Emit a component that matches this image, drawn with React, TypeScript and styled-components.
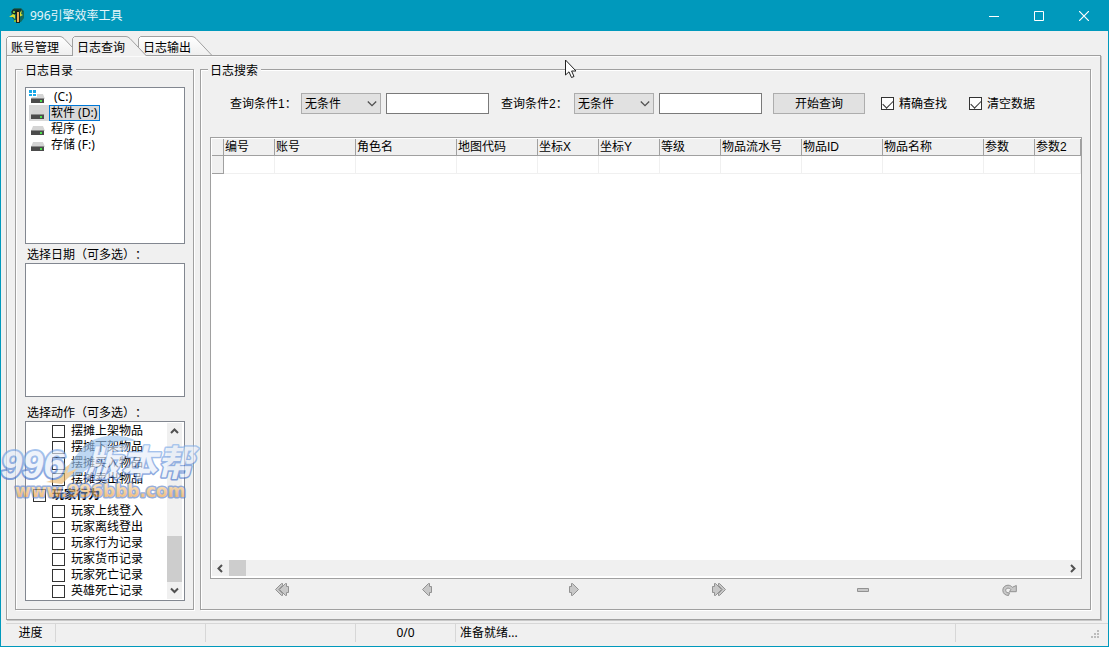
import React from "react";
import styled, { createGlobalStyle } from "styled-components";

const FONT = '"Liberation Sans", "Noto Sans CJK SC", sans-serif';
const UI_FONT = '"Noto Sans", "Noto Sans CJK SC", sans-serif';
const ACCENT = "#0099bc";
const FACE = "#f0f0f0";
const LINE = "#a0a0a0";

const GlobalStyle = createGlobalStyle`
  * { box-sizing: border-box; }
  body { margin: 0; background: ${FACE}; }
  button, input, select { font: inherit; color: inherit; margin: 0; }
`;

const Window = styled.div`
  position: relative;
  display: flex;
  flex-direction: column;
  height: 100vh;
  border: 1px solid ${ACCENT};
  border-top: 0;
  background: ${FACE};
  color: #000;
  font: 12px/16px ${FONT};
  text-spacing-trim: space-all;
  white-space: nowrap;
  overflow: hidden;
`;

const TitleBar = styled.header`
  display: flex;
  align-items: center;
  flex: none;
  height: 31px;
  padding: 0 2px 0 8px;
  background: ${ACCENT};
  color: #e6f6fa;
`;

const AppTitle = styled.h1`
  flex: 1;
  margin: 0 0 0 5px;
  font: 12px/16px ${UI_FONT};
`;

const CaptionButton = styled.button`
  display: grid;
  place-items: center;
  width: 45px;
  height: 31px;
  padding: 0;
  border: 0;
  background: none;
`;

const TabStrip = styled.nav`
  display: flex;
  flex: none;
  height: 20px;
  margin: 5px 0 -1px 5px;
`;

const TabButton = styled.button<{ $active?: boolean }>`
  position: relative;
  z-index: ${(p) => (p.$active ? 2 : 1)};
  width: 66px;
  height: 20px;
  padding: 3px 0 0 5px;
  border: 0;
  background: none;
  text-align: left;
  line-height: 16px;
`;

const TabShape = styled.svg`
  position: absolute;
  left: 0;
  top: 0;
  z-index: -1;
  overflow: visible;
`;

const Page = styled.main`
  display: flex;
  flex: 1;
  min-height: 0;
  gap: 6px;
  margin: 0 7px 0 5px;
  padding: 5px 9px 9px 8px;
  border: 1px solid ${LINE};
  box-shadow: 1px 1px 0 #c8c8c8, inset 1px 1px 0 #fbfbfb;
`;

const Group = styled.fieldset<{ $grow?: boolean }>`
  display: flex;
  flex-direction: column;
  flex: ${(p) => (p.$grow ? "1" : "0 0 179px")};
  min-width: 0;
  margin: 0;
  padding: ${(p) => (p.$grow ? "15px 8px 8px 9px" : "9px 8px 8px 9px")};
  border: 1px solid ${LINE};
  box-shadow: 1px 1px 0 #fff, inset 1px 1px 0 #fff;
`;

const Legend = styled.legend`
  height: 17px;
  padding: 2px 3px 0 2px;
  margin-left: -2px;
  background: ${FACE};
`;

const ListBox = styled.ul<{ $height?: number }>`
  flex: ${(p) => (p.$height ? `0 0 ${p.$height}px` : "1")};
  min-height: 0;
  margin: 0;
  padding: 1px 3px;
  list-style: none;
  border: 1px solid #828790;
  background: #fff;
  overflow: hidden;
`;

const Caption = styled.h2<{ $gap?: number }>`
  flex: none;
  margin: 0;
  padding: ${(p) => p.$gap ?? 4}px 0 0 2px;
  font: 12px/15px ${FONT};
`;

const Drive = styled.li<{ $selected?: boolean }>`
  display: flex;
  align-items: center;
  height: 16px;
  width: max-content;
  background: ${(p) => (p.$selected ? "#d9d9d9" : "none")};
  font-family: ${UI_FONT};
`;

const DriveName = styled.span<{ $selected?: boolean; $indent?: boolean }>`
  height: 16px;
  margin-left: 3px;
  padding: 0 2px 0 ${(p) => (p.$indent ? 4 : 1)}px;
  line-height: 14px;
  border: 1px solid ${(p) => (p.$selected ? "#0078d7" : "transparent")};
`;

const ActionBox = styled.div`
  display: flex;
  flex: 1;
  min-height: 0;
  padding: 1px;
  border: 1px solid #828790;
  background: #fff;
`;

const ActionList = styled.ul`
  flex: 1;
  margin: 0;
  padding: 0;
  list-style: none;
  overflow: hidden;
`;

const ActionRow = styled.li<{ $parent?: boolean }>`
  padding-left: ${(p) => (p.$parent ? 6 : 25)}px;
  font-weight: ${(p) => (p.$parent ? 700 : 400)};
`;

const CheckLabel = styled.label<{ $gap?: number }>`
  display: flex;
  align-items: center;
  gap: ${(p) => p.$gap ?? 6}px;
  height: 16px;
`;

const CheckBox = styled.input`
  appearance: none;
  flex: none;
  display: grid;
  place-items: start center;
  width: 13px;
  height: 13px;
  border: 1px solid #333;
  background: #fff;

  &:checked::after {
    content: "";
    width: 9px;
    height: 5px;
    margin-top: 2px;
    border: solid #333;
    border-width: 0 0 1px 1px;
    transform: rotate(-45deg);
  }
`;

const VScroll = styled.div`
  display: flex;
  flex-direction: column;
  align-items: stretch;
  width: 15px;
  margin-right: 1px;
  background: ${FACE};
`;

const VThumb = styled.div`
  height: 46px;
  margin-top: auto;
  background: #cdcdcd;
`;

const HScroll = styled.div`
  display: flex;
  height: 16px;
  background: ${FACE};
`;

const HThumb = styled.div`
  width: 17px;
  margin-right: auto;
  background: #cdcdcd;
`;

const ScrollButton = styled.button`
  display: grid;
  place-items: center;
  flex: 0 0 17px;
  padding: 0;
  border: 0;
  background: none;
`;

const SearchBar = styled.div`
  display: flex;
  align-items: center;
  flex: none;
  height: 21px;
  padding-left: 20px;
`;

const FieldLabel = styled.label<{ $wide?: boolean }>`
  flex: 0 0 ${(p) => (p.$wide ? 85 : 71)}px;
  padding-left: ${(p) => (p.$wide ? 12 : 0)}px;
`;

const SelectWrap = styled.span`
  position: relative;
  display: flex;
  flex: 0 0 80px;
  margin-right: 5px;
`;

const Select = styled.select`
  appearance: none;
  width: 100%;
  height: 21px;
  padding: 0 20px 0 3px;
  border: 1px solid #adadad;
  border-radius: 0;
  background: #e1e1e1;
`;

const SelectArrow = styled.svg`
  position: absolute;
  right: 4px;
  top: 8px;
  pointer-events: none;
`;

const TextBox = styled.input`
  flex: 0 0 103px;
  width: 103px;
  height: 21px;
  padding: 0 3px;
  border: 1px solid #7a7a7a;
  background: #fff;
`;

const PushButton = styled.button`
  flex: 0 0 92px;
  height: 21px;
  margin: 0 16px 0 11px;
  padding: 0;
  border: 1px solid #adadad;
  background: #e1e1e1;
`;

const Checks = styled.div`
  display: flex;
  gap: 22px;
`;

const GridBox = styled.div`
  display: flex;
  flex-direction: column;
  flex: 1;
  min-height: 0;
  margin-top: 23px;
  padding: 1px 0 2px 1px;
  border: 1px solid ${LINE};
  background: #fff;
`;

const GridScroll = styled.div`
  flex: 1;
  min-height: 0;
  overflow: hidden;
`;

const Table = styled.table`
  width: 100%;
  table-layout: fixed;
  border-collapse: separate;
  border-spacing: 0;
`;

const Th = styled.th`
  height: 17px;
  padding: 0 0 0 1px;
  border-right: 1px solid ${LINE};
  border-bottom: 1px solid ${LINE};
  background: ${FACE};
  font-weight: 400;
  line-height: 16px;
  text-align: left;
`;

const Td = styled.td<{ $handle?: boolean }>`
  height: 18px;
  padding: 0;
  border-right: 1px solid ${(p) => (p.$handle ? LINE : FACE)};
  border-bottom: 1px solid ${(p) => (p.$handle ? LINE : FACE)};
  background: ${(p) => (p.$handle ? FACE : "#fff")};
`;

const Navigator = styled.div`
  display: grid;
  grid-template-columns: repeat(6, 1fr);
  flex: none;
  height: 22px;
  padding-bottom: 2px;
`;

const NavButton = styled.button`
  display: grid;
  place-items: center;
  padding: 0;
  border: 0;
  background: none;
`;

const StatusBar = styled.footer`
  display: flex;
  flex: none;
  height: 23px;
  margin: 3px 0 0 5px;
  border-top: 1px solid #d7d7d7;
`;

const StatusCell = styled.div<{ $width?: number; $center?: boolean }>`
  flex: ${(p) => (p.$width ? `0 0 ${p.$width}px` : "1")};
  height: 18px;
  padding: 1px 0 0 ${(p) => (p.$center ? 0 : 4)}px;
  border-right: 1px solid #d7d7d7;
  font-family: ${UI_FONT};
  text-align: ${(p) => (p.$center ? "center" : "left")};
`;

const GripArea = styled.div`
  display: flex;
  align-items: flex-end;
  justify-content: flex-end;
  flex: 0 0 152px;
  padding: 0 9px 8px 0;
`;

const Watermark = styled.svg`
  position: absolute;
  left: -1px;
  top: 430px;
  z-index: 5;
  pointer-events: none;
`;

const Pointer = styled.svg`
  position: absolute;
  left: 563px;
  top: 59px;
  z-index: 6;
  pointer-events: none;
`;

const drives = [
  { name: "(C:)", system: true },
  { name: "软件 (D:)", selected: true },
  { name: "程序 (E:)" },
  { name: "存储 (F:)" },
];

const actions = [
  { name: "摆摊上架物品" },
  { name: "摆摊下架物品" },
  { name: "摆摊买入物品" },
  { name: "摆摊卖出物品" },
  { name: "玩家行为", parent: true },
  { name: "玩家上线登入" },
  { name: "玩家离线登出" },
  { name: "玩家行为记录" },
  { name: "玩家货币记录" },
  { name: "玩家死亡记录" },
  { name: "英雄死亡记录" },
];

const columns: { name: string; width?: number }[] = [
  { name: "编号", width: 51 },
  { name: "账号", width: 81 },
  { name: "角色名", width: 101 },
  { name: "地图代码", width: 81 },
  { name: "坐标X", width: 61 },
  { name: "坐标Y", width: 61 },
  { name: "等级", width: 61 },
  { name: "物品流水号", width: 81 },
  { name: "物品ID", width: 81 },
  { name: "物品名称", width: 101 },
  { name: "参数", width: 51 },
  { name: "参数2" },
];

const tabs = ["账号管理", "日志查询", "日志输出"];

function Tab({ name, active }: { name: string; active?: boolean }) {
  return (
    <TabButton type="button" $active={active}>
      <TabShape width="75" height="20" aria-hidden="true">
        <defs>
          <linearGradient id="tabFace" x1="0" y1="0" x2="0" y2="1">
            <stop offset="0" stopColor="#ffffff" />
            <stop offset="1" stopColor="#eeeeee" />
          </linearGradient>
        </defs>
        <path
          d="M.5 20V2.5L2.5.5H54Q56 .5 58 2.5L74.500 20"
          fill={active ? FACE : "url(#tabFace)"}
          stroke={LINE}
        />
        {!active && <path d="M0 19.500H75" stroke={LINE} />}
      </TabShape>
      {name}
    </TabButton>
  );
}

function DriveIcon({ system }: { system?: boolean }) {
  return (
    <svg width="17" height="14" viewBox="0 0 17 14" aria-hidden="true">
      <path d="M4 4H14L16 9H2Z" fill="#d4d4d4" />
      <path d="M2 8H15V13H2Z" fill="#4b4b4b" />
      <path d="M2 8H15V9H2Z" fill="#8c8c8c" />
      <path d="M11 10H13V12H11Z" fill="#4be04b" />
      {system && (
        <>
          <path d="M0 0H8V7H0Z" fill="#fff" />
          <path d="M0 0H3V3H0ZM4 0H7V3H4ZM0 4H3V6H0ZM4 4H7V6H4Z" fill="#18a8e8" />
        </>
      )}
    </svg>
  );
}

const chevrons = {
  up: "M1 6L4.500 2.500L8 6",
  down: "M1 2.500L4.500 6L8 2.500",
  left: "M6 1L2.500 4.500L6 8",
  right: "M3 1L6.500 4.500L3 8",
};

function Scroller({ dir }: { dir: keyof typeof chevrons }) {
  return (
    <ScrollButton type="button" aria-label={dir}>
      <svg width="9" height="9" fill="none" stroke="#505050" strokeWidth="2" aria-hidden="true">
        <path d={chevrons[dir]} />
      </svg>
    </ScrollButton>
  );
}

function Condition({ index }: { index: number }) {
  return (
    <>
      <FieldLabel htmlFor={`cond${index}`} $wide={index === 2}>
        查询条件{index}：
      </FieldLabel>
      <SelectWrap>
        <Select id={`cond${index}`} defaultValue="无条件">
          <option>无条件</option>
        </Select>
        <SelectArrow width="10" height="6" fill="none" stroke="#505050" aria-hidden="true">
          <path d="M.8.5L5 4.700L9.200.5" strokeWidth="1.300" />
        </SelectArrow>
      </SelectWrap>
      <TextBox type="text" aria-label={`查询条件${index}`} />
    </>
  );
}

const navIcons: { label: string; paths: string[] }[] = [
  {
    label: "首条",
    paths: [
      "M4.500 7.500L10.500 1.500H11.500V4.500H13.500V10.500H11.500V13.500H10.500Z",
      "M.5 7.500L6.500 1.500H7.500V3.500L3.700 7.500L7.500 11.500V13.500H6.500Z",
    ],
  },
  { label: "上一条", paths: ["M2.500 7.500L8.500 1.500H9.500V4.500H11.500V10.500H9.500V13.500H8.500Z"] },
  { label: "下一条", paths: ["M12.500 7.500L6.500 1.500H5.500V4.500H3.500V10.500H5.500V13.500H6.500Z"] },
  {
    label: "末条",
    paths: [
      "M10.500 7.500L4.500 1.500H3.500V4.500H1.500V10.500H3.500V13.500H4.500Z",
      "M14.500 7.500L8.500 1.500H7.500V3.500L11.300 7.500L7.500 11.500V13.500H8.500Z",
    ],
  },
  { label: "删除", paths: ["M1.500 6.500H12.500V9.500H1.500Z"] },
  {
    label: "刷新",
    paths: [
      "M6.500 13.500C3.500 13.500.8 11.500.8 8.300C.8 5 3.500 3.200 6 3.200C7.800 3.200 9.300 4 10.300 5.300L14.300 3.500V9.700H7.500L8.800 7.500C7.800 5.700 3.800 5.500 3.700 8.300C3.700 10.500 5.500 11 7.500 10.800Z",
    ],
  },
];

export default function App() {
  return (
    <>
      <GlobalStyle />
      <Window>
        <TitleBar>
          <svg width="16" height="17" viewBox="0 0 16 17" aria-hidden="true">
            <path d="M3 4L5 1H12L15 4V11L12 15H8L4 12L2 8Z" fill="#12695c" />
            <path d="M4 2H12L14 5L11 4H7L4 7L2 5Z" fill="#173735" />
            <path d="M0 10L4 7L6 8V12L4 10ZM10 7L13 3L12 7L14 8L10 10Z" fill="#d9dd35" />
            <path d="M5 4L9 3L11 5V16H7V7L4 7Z" fill="#18241d" />
            <path d="M8 5H10V15H8Z" fill="#edaf59" />
            <path d="M4 4H6V6H4ZM5 13H7V15H5Z" fill="#73bd3b" />
          </svg>
          <AppTitle>996引擎效率工具</AppTitle>
          <CaptionButton type="button" aria-label="最小化">
            <svg width="10" height="10" stroke="#fff" aria-hidden="true"><path d="M0 5.500H10" /></svg>
          </CaptionButton>
          <CaptionButton type="button" aria-label="最大化">
            <svg width="10" height="10" fill="none" stroke="#fff" aria-hidden="true"><path d="M.5.5H9.500V9.500H.5Z" /></svg>
          </CaptionButton>
          <CaptionButton type="button" aria-label="关闭">
            <svg width="10" height="10" stroke="#fff" strokeWidth="1.200" aria-hidden="true"><path d="M0 0L10 10M10 0L0 10" /></svg>
          </CaptionButton>
        </TitleBar>

        <TabStrip>
          {tabs.map((name, i) => (
            <Tab key={name} name={name} active={i === 1} />
          ))}
        </TabStrip>

        <Page>
          <Group>
            <Legend>日志目录</Legend>
            <ListBox $height={157}>
              {drives.map((d) => (
                <Drive key={d.name} $selected={d.selected}>
                  <DriveIcon system={d.system} />
                  <DriveName $selected={d.selected} $indent={d.system}>{d.name}</DriveName>
                </Drive>
              ))}
            </ListBox>
            <Caption>选择日期（可多选）：</Caption>
            <ListBox $height={134} />
            <Caption $gap={9}>选择动作（可多选）：</Caption>
            <ActionBox>
              <ActionList>
                {actions.map((a) => (
                  <ActionRow key={a.name} $parent={a.parent}>
                    <CheckLabel>
                      <CheckBox type="checkbox" />
                      {a.name}
                    </CheckLabel>
                  </ActionRow>
                ))}
              </ActionList>
              <VScroll>
                <Scroller dir="up" />
                <VThumb />
                <Scroller dir="down" />
              </VScroll>
            </ActionBox>
          </Group>

          <Group $grow>
            <Legend>日志搜索</Legend>
            <SearchBar>
              <Condition index={1} />
              <Condition index={2} />
              <PushButton type="button">开始查询</PushButton>
              <Checks>
                <CheckLabel $gap={5}>
                  <CheckBox type="checkbox" defaultChecked />
                  精确查找
                </CheckLabel>
                <CheckLabel $gap={5}>
                  <CheckBox type="checkbox" defaultChecked />
                  清空数据
                </CheckLabel>
              </Checks>
            </SearchBar>
            <GridBox>
              <GridScroll>
                <Table>
                  <colgroup>
                    <col width={12} />
                    {columns.map((c) => (
                      <col key={c.name} width={c.width} />
                    ))}
                  </colgroup>
                  <thead>
                    <tr>
                      <Th />
                      {columns.map((c) => (
                        <Th key={c.name}>{c.name}</Th>
                      ))}
                    </tr>
                  </thead>
                  <tbody>
                    <tr>
                      <Td $handle />
                      {columns.map((c) => (
                        <Td key={c.name} />
                      ))}
                    </tr>
                  </tbody>
                </Table>
              </GridScroll>
              <HScroll>
                <Scroller dir="left" />
                <HThumb />
                <Scroller dir="right" />
              </HScroll>
            </GridBox>
            <Navigator>
              {navIcons.map((n) => (
                <NavButton key={n.label} type="button" aria-label={n.label}>
                  <svg width="15" height="15" fill="#c8c8c8" stroke="#929292" aria-hidden="true">
                    {n.paths.map((d) => (
                      <path key={d} d={d} />
                    ))}
                  </svg>
                </NavButton>
              ))}
            </Navigator>
          </Group>
        </Page>

        <StatusBar>
          <StatusCell $width={50} $center>进度</StatusCell>
          <StatusCell $width={150} />
          <StatusCell $width={150} />
          <StatusCell $width={100} $center>0/0</StatusCell>
          <StatusCell>准备就绪...</StatusCell>
          <GripArea>
            <svg width="8" height="8" fill="#bcbcbc" aria-hidden="true">
              <path d="M6 0H8V2H6ZM3 3H5V5H3ZM6 3H8V5H6ZM0 6H2V8H0ZM3 6H5V8H3ZM6 6H8V8H6Z" />
            </svg>
          </GripArea>
        </StatusBar>

        <Watermark width="204" height="76" aria-hidden="true">
          <defs>
            <linearGradient id="markBlue" gradientUnits="userSpaceOnUse" x1="0" y1="10" x2="0" y2="52">
              <stop offset="0" stopColor="#8db9ee" />
              <stop offset="1" stopColor="#3f6cc8" />
            </linearGradient>
            <linearGradient id="markGold" x1="0" y1="0" x2="0" y2="1">
              <stop offset="0" stopColor="#fbe3b0" />
              <stop offset="1" stopColor="#e08a28" />
            </linearGradient>
          </defs>
          <g opacity="0.65" fontWeight="700" fontStyle="italic" paintOrder="stroke" strokeLinejoin="round">
            <path d="M62 48C68 34 76 26 84 16C98 4 122 2 138 12C120 8 104 14 96 26C92 38 80 48 62 48Z" fill="#9cc4ee" />
            <path d="M46 52C56 50 60 40 70 34L67 43L78 38L62 54Z" fill="#eab66a" />
            <text x="1" y="48" fontSize="38" fontFamily="Liberation Sans, sans-serif" fill="#e6edf9" stroke="url(#markBlue)" strokeWidth="4">996</text>
            <text x="85" y="46" fontSize="36" fontFamily="Noto Sans CJK SC, sans-serif" fill="#e6edf9" stroke="url(#markBlue)" strokeWidth="3">版本帮</text>
            <text x="15" y="67" fontSize="17" fontStyle="normal" fontFamily="DejaVu Sans, sans-serif" fill="url(#markGold)" stroke="#5f83c8" strokeWidth="3">www.996bbb.com</text>
          </g>
        </Watermark>

        <Pointer width="13" height="20" aria-hidden="true">
          <path d="M1.500 1V16L5 12.800L7.500 18.500L10 17.500L7.600 12H12Z" fill="#fff" stroke="#222" />
        </Pointer>
      </Window>
    </>
  );
}
